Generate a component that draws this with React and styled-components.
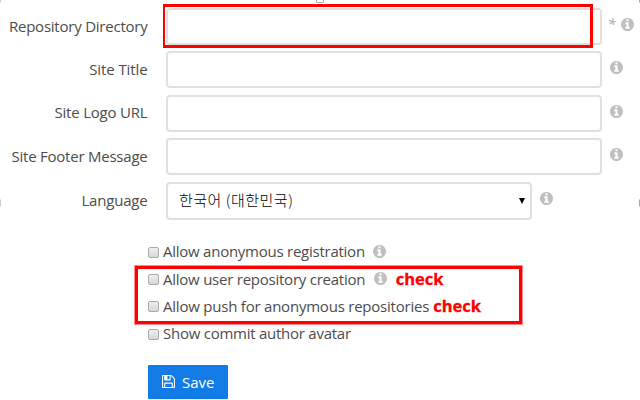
import React from "react";
import styled, { createGlobalStyle } from "styled-components";

const GlobalStyle = createGlobalStyle`
  *, *::before, *::after { box-sizing: border-box; }
  body { margin: 0; background: #fff; overflow: hidden; }
`;

const Page = styled.main`
  position: relative;
  width: 640px;
  height: 400px;
  overflow: hidden;
  padding-top: 8px;
  background: #fff;
  color: #4c4c4c;
  font: 15px/20px "Open Sans", "Noto Sans", sans-serif;
`;

const Fields = styled.div`
  display: grid;
  grid-template-rows: 37px 37px 37px 37px 38px;
  row-gap: 6.4px;
`;

const FieldRow = styled.div`
  display: grid;
  grid-template-columns: 147.5px 436px auto;
  column-gap: 18.5px;
  align-items: center;
`;

const Label = styled.label`
  text-align: right;
  white-space: nowrap;
  padding-bottom: ${(p) => p.$lift ?? 2}px;
  letter-spacing: ${(p) => p.$track || 0}px;
`;

const Control = styled.div`
  display: flex;
  align-items: center;
  gap: 7.5px;
`;

const TextInput = styled.input`
  width: 436px;
  flex: none;
  height: 37px;
  border: 2px solid #e0e0e0;
  border-radius: 4px;
  background: #fff;
  outline: none;
`;

const SelectBox = styled.button`
  display: flex;
  flex: none;
  align-items: center;
  justify-content: space-between;
  width: 366px;
  height: 38px;
  padding: 0 5px 0 11px;
  border: 2px solid #e0e0e0;
  border-radius: 4px;
  background: #fff;
  color: #000;
  font: 300 15px/20px "Noto Sans CJK KR", sans-serif;
`;

const SelectText = styled.span`
  padding-bottom: 2px;
  letter-spacing: ${(p) => p.$track}px;
`;

const Arrow = styled.span`
  width: 6px;
  height: 6px;
  margin-top: 1px;
  background: #000;
  clip-path: polygon(0 0, 100% 0, 50% 100%);
`;

const Star = styled.span`
  width: 8px;
  margin: 0 -2px 7px -2px;
  color: #b4b4b4;
  font-size: 15px;
  font-style: italic;
  font-weight: 600;
`;

const InfoSvg = styled.svg`
  flex: none;
  width: 13px;
  height: 13px;
  margin-bottom: 4px;
  fill: #bfbfbf;
`;

const Options = styled.div`
  display: grid;
  grid-template-rows: repeat(4, 27.3px);
  margin: 18.1px 0 0 148px;
`;

const Option = styled.label`
  display: flex;
  align-items: center;
  white-space: nowrap;
`;

const OptionText = styled.span`
  margin-left: 4px;
  letter-spacing: ${(p) => p.$track || 0}px;
`;

const OptionInfo = styled.span`
  display: flex;
  margin-left: 8.5px;
  padding-top: 4px;
`;

const Checkbox = styled.input.attrs({ type: "checkbox" })`
  appearance: none;
  width: 11px;
  height: 11px;
  margin: 2px 0 0;
  border: 1px solid #aaa;
  border-radius: 2px;
  background: linear-gradient(#eee, #d8d8d8);
`;

const Note = styled.strong`
  margin-left: ${(p) => p.$gap}px;
  color: #f00;
  font-size: 16.5px;
  font-weight: 700;
  -webkit-text-stroke: 0.3px #f00;
`;

const SaveButton = styled.button`
  display: flex;
  align-items: center;
  gap: 7px;
  width: 80px;
  height: 34px;
  margin: 17.7px 0 0 148px;
  padding: 0 0 0 14px;
  border: 0;
  border-radius: 1px;
  background: #137be6;
  color: #fff;
  font: 15px/20px "Open Sans", sans-serif;
`;

const SaveSvg = styled.svg`
  width: 13px;
  height: 13px;
  fill: #fff;
`;

const Highlight = styled.div`
  position: absolute;
  left: ${(p) => p.$x}px;
  top: ${(p) => p.$y}px;
  width: ${(p) => p.$w}px;
  height: ${(p) => p.$h}px;
  border: 3px solid #f00;
  border-width: ${(p) => p.$line || "3px"};
  box-shadow: ${(p) => (p.$soft ? "0 0 0 1px rgba(255, 0, 0, 0.45)" : "none")};
  pointer-events: none;
`;

const Handle = styled.div`
  position: absolute;
  left: ${(p) => p.$x}px;
  top: ${(p) => p.$y}px;
  width: 8px;
  height: 8px;
  border: 1px solid ${(p) => p.$tone || "#aaa"};
  border-radius: 1px;
  background: #fff;
`;

const Info = () => (
  <InfoSvg viewBox="0 128 1536 1536" aria-hidden="true">
    <path d="M1024 1376v-160q0-14-9-23t-23-9h-96v-512q0-14-9-23t-23-9h-320q-14 0-23 9t-9 23v160q0 14 9 23t23 9h96v320h-96q-14 0-23 9t-9 23v160q0 14 9 23t23 9h448q14 0 23-9t9-23zm-128-896v-160q0-14-9-23t-23-9h-192q-14 0-23 9t-9 23v160q0 14 9 23t23 9h192q14 0 23-9t9-23zm640 416q0 209-103 385.5t-279.5 279.5-385.5 103-385.5-103-279.5-279.5-103-385.5 103-385.5 279.5-279.5 385.5-103 385.5 103 279.5 279.5 103 385.5z" />
  </InfoSvg>
);

const SaveIcon = () => (
  <SaveSvg viewBox="0 128 1536 1536" aria-hidden="true">
    <path d="M384 1536h768v-384h-768v384zm896 0h128v-896q0-14-10-38.5t-20-34.5l-281-281q-10-10-34-20t-39-10v416q0 40-28 68t-68 28h-576q-40 0-68-28t-28-68v-416h-128v1280h128v-416q0-40 28-68t68-28h832q40 0 68 28t28 68v416zm-384-928v-320q0-13-9.5-22.5t-22.5-9.5h-192q-13 0-22.5 9.5t-9.5 22.5v320q0 13 9.5 22.5t22.5 9.5h192q13 0 22.5-9.5t9.5-22.5zm640 32v928q0 40-28 68t-68 28h-1344q-40 0-68-28t-28-68v-1344q0-40 28-68t68-28h928q40 0 88 20t76 48l280 280q28 28 48 76t20 88z" />
  </SaveSvg>
);

const fields = [
  { id: "dir", label: "Repository Directory", required: true, track: -0.23 },
  { id: "title", label: "Site Title", track: -0.1 },
  { id: "logo", label: "Site Logo URL", track: -0.2 },
  { id: "footer", label: "Site Footer Message", track: -0.23 },
];

const options = [
  { label: "Allow anonymous registration", info: true, track: -0.25 },
  { label: "Allow user repository creation", info: true, note: 9, track: -0.24 },
  { label: "Allow push for anonymous repositories", note: 4, track: -0.22 },
  { label: "Show commit author avatar", track: -0.25 },
];

export default function App() {
  return (
    <Page>
      <GlobalStyle />
      <Fields>
        {fields.map((f) => (
          <FieldRow key={f.id}>
            <Label htmlFor={f.id} $track={f.track}>{f.label}</Label>
            <Control>
              <TextInput id={f.id} />
              {f.required && <Star>*</Star>}
              <Info />
            </Control>
          </FieldRow>
        ))}
        <FieldRow>
          <Label $lift={1} $track={-0.2}>Language</Label>
          <Control>
            <SelectBox type="button">
              <SelectText $track={0.5}>한국어 (대한민국)</SelectText>
              <Arrow />
            </SelectBox>
            <Info />
          </Control>
        </FieldRow>
      </Fields>
      <Options>
        {options.map((o) => (
          <Option key={o.label}>
            <Checkbox />
            <OptionText $track={o.track}>{o.label}</OptionText>
            {o.info && <OptionInfo><Info /></OptionInfo>}
            {o.note && <Note $gap={o.note}>check</Note>}
          </Option>
        ))}
      </Options>
      <SaveButton type="button"><SaveIcon />Save</SaveButton>
      <Highlight $x={163} $y={4} $w={430} $h={44} $line="3px 3px 3px 2px" />
      <Highlight $x={135} $y={266} $w={387} $h={58} $soft />
      <Handle $x={316} $y={-5} />
      <Handle $x={-7} $y={-5} $tone="#ccc" />
      <Handle $x={-7} $y={199} $tone="#ccc" />
      <Handle $x={639} $y={-5} />
      <Handle $x={639} $y={199} />
    </Page>
  );
}
